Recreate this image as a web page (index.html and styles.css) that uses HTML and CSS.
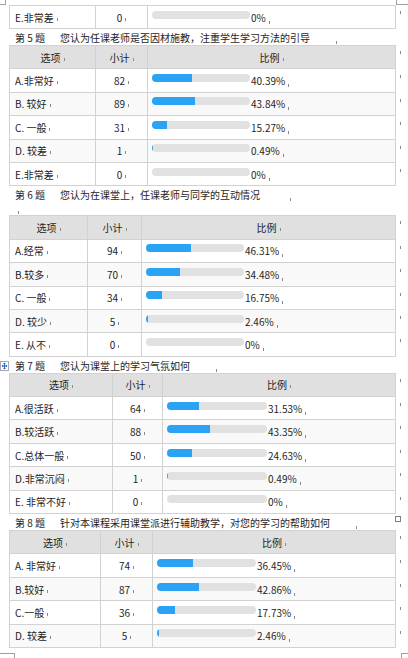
FILE: index.html
```html
<!DOCTYPE html>
<html lang="zh-CN">
<head>
<meta charset="utf-8">
<title>问卷统计</title>
<link rel="stylesheet" href="styles.css">
</head>
<body>
<div class="page">
  <span class="crop crop-tl"></span>
  <span class="crop crop-tr"></span>
  <span class="crop crop-bl"></span>
  <span class="crop crop-br"></span>

  <div class="tbl t5 partial">
    <div class="row">
      <div class="c c1">E.非常差<i class="m"></i></div>
      <div class="c c2">0<i class="m"></i></div>
      <div class="c c3"><span class="bar"><span class="fill" style="width:0%"></span></span><span class="pct">0%<i class="m"></i></span></div>
      <i class="rm"></i>
    </div>
  </div>

  <div class="title"><span class="qn">第 5 题</span>您认为任课老师是否因材施教，注重学生学习方法的引导<i class="m tm"></i></div>
  <div class="tbl t5">
    <div class="row hd">
      <div class="c c1">选项<i class="m"></i></div>
      <div class="c c2">小计<i class="m"></i></div>
      <div class="c c3 ctr">比例<i class="m"></i></div>
      <i class="rm"></i>
    </div>
    <div class="row">
      <div class="c c1">A.非常好<i class="m"></i></div>
      <div class="c c2">82<i class="m"></i></div>
      <div class="c c3"><span class="bar"><span class="fill" style="width:40.39%"></span></span><span class="pct">40.39%<i class="m"></i></span></div>
      <i class="rm"></i>
    </div>
    <div class="row alt">
      <div class="c c1">B. 较好<i class="m"></i></div>
      <div class="c c2">89<i class="m"></i></div>
      <div class="c c3"><span class="bar"><span class="fill" style="width:43.84%"></span></span><span class="pct">43.84%<i class="m"></i></span></div>
      <i class="rm"></i>
    </div>
    <div class="row">
      <div class="c c1">C. 一般<i class="m"></i></div>
      <div class="c c2">31<i class="m"></i></div>
      <div class="c c3"><span class="bar"><span class="fill" style="width:15.27%"></span></span><span class="pct">15.27%<i class="m"></i></span></div>
      <i class="rm"></i>
    </div>
    <div class="row alt">
      <div class="c c1">D. 较差<i class="m"></i></div>
      <div class="c c2">1<i class="m"></i></div>
      <div class="c c3"><span class="bar"><span class="fill" style="width:0.49%"></span></span><span class="pct">0.49%<i class="m"></i></span></div>
      <i class="rm"></i>
    </div>
    <div class="row">
      <div class="c c1">E.非常差<i class="m"></i></div>
      <div class="c c2">0<i class="m"></i></div>
      <div class="c c3"><span class="bar"><span class="fill" style="width:0%"></span></span><span class="pct">0%<i class="m"></i></span></div>
      <i class="rm"></i>
    </div>
  </div>

  <div class="title"><span class="qn">第 6 题</span>您认为在课堂上，任课老师与同学的互动情况<i class="m tm tm6"></i></div>
  <div class="blank"><i class="m"></i></div>
  <div class="tbl t6">
    <div class="row hd">
      <div class="c c1">选项<i class="m"></i></div>
      <div class="c c2">小计<i class="m"></i></div>
      <div class="c c3 ctr">比例<i class="m"></i></div>
      <i class="rm"></i>
    </div>
    <div class="row">
      <div class="c c1">A.经常<i class="m"></i></div>
      <div class="c c2">94<i class="m"></i></div>
      <div class="c c3"><span class="bar"><span class="fill" style="width:46.31%"></span></span><span class="pct">46.31%<i class="m"></i></span></div>
      <i class="rm"></i>
    </div>
    <div class="row alt">
      <div class="c c1">B.较多<i class="m"></i></div>
      <div class="c c2">70<i class="m"></i></div>
      <div class="c c3"><span class="bar"><span class="fill" style="width:34.48%"></span></span><span class="pct">34.48%<i class="m"></i></span></div>
      <i class="rm"></i>
    </div>
    <div class="row">
      <div class="c c1">C. 一般<i class="m"></i></div>
      <div class="c c2">34<i class="m"></i></div>
      <div class="c c3"><span class="bar"><span class="fill" style="width:16.75%"></span></span><span class="pct">16.75%<i class="m"></i></span></div>
      <i class="rm"></i>
    </div>
    <div class="row alt">
      <div class="c c1">D. 较少<i class="m"></i></div>
      <div class="c c2">5<i class="m"></i></div>
      <div class="c c3"><span class="bar"><span class="fill" style="width:2.46%"></span></span><span class="pct">2.46%<i class="m"></i></span></div>
      <i class="rm"></i>
    </div>
    <div class="row">
      <div class="c c1">E. 从不<i class="m"></i></div>
      <div class="c c2">0<i class="m"></i></div>
      <div class="c c3"><span class="bar"><span class="fill" style="width:0%"></span></span><span class="pct">0%<i class="m"></i></span></div>
      <i class="rm"></i>
    </div>
  </div>

  <div class="title"><span class="handle"><svg width="9" height="10" viewBox="0 0 9 10"><rect x="0.5" y="0.5" width="8" height="9" fill="#fff" stroke="#a9a9a9"/><path d="M4.5 2v6M2 5h5" stroke="#2c62c0" stroke-width="1"/><path d="M4.5 1.5l-1.5 1.6h3zM4.5 8.5l-1.5-1.6h3zM1.5 5l1.6-1.5v3zM7.5 5l-1.6-1.5v3z" fill="#2c62c0"/></svg></span><span class="qn">第 7 题</span>您认为课堂上的学习气氛如何<i class="m tm"></i></div>
  <div class="tbl t7">
    <div class="row hd">
      <div class="c c1">选项<i class="m"></i></div>
      <div class="c c2">小计<i class="m"></i></div>
      <div class="c c3 ctr">比例<i class="m"></i></div>
      <i class="rm"></i>
    </div>
    <div class="row">
      <div class="c c1">A.很活跃<i class="m"></i></div>
      <div class="c c2">64<i class="m"></i></div>
      <div class="c c3"><span class="bar"><span class="fill" style="width:31.53%"></span></span><span class="pct">31.53%<i class="m"></i></span></div>
      <i class="rm"></i>
    </div>
    <div class="row alt">
      <div class="c c1">B.较活跃<i class="m"></i></div>
      <div class="c c2">88<i class="m"></i></div>
      <div class="c c3"><span class="bar"><span class="fill" style="width:43.35%"></span></span><span class="pct">43.35%<i class="m"></i></span></div>
      <i class="rm"></i>
    </div>
    <div class="row">
      <div class="c c1">C.总体一般<i class="m"></i></div>
      <div class="c c2">50<i class="m"></i></div>
      <div class="c c3"><span class="bar"><span class="fill" style="width:24.63%"></span></span><span class="pct">24.63%<i class="m"></i></span></div>
      <i class="rm"></i>
    </div>
    <div class="row alt">
      <div class="c c1">D.非常沉闷<i class="m"></i></div>
      <div class="c c2">1<i class="m"></i></div>
      <div class="c c3"><span class="bar"><span class="fill" style="width:0.49%"></span></span><span class="pct">0.49%<i class="m"></i></span></div>
      <i class="rm"></i>
    </div>
    <div class="row">
      <div class="c c1">E. 非常不好<i class="m"></i></div>
      <div class="c c2">0<i class="m"></i></div>
      <div class="c c3"><span class="bar"><span class="fill" style="width:0%"></span></span><span class="pct">0%<i class="m"></i></span></div>
      <i class="rm"></i>
    </div>
    <span class="resize"></span>
  </div>

  <div class="title"><span class="qn">第 8 题</span>针对本课程采用课堂派进行辅助教学，对您的学习的帮助如何<i class="m tm"></i></div>
  <div class="tbl t8">
    <div class="row hd">
      <div class="c c1">选项<i class="m"></i></div>
      <div class="c c2">小计<i class="m"></i></div>
      <div class="c c3 ctr">比例<i class="m"></i></div>
      <i class="rm"></i>
    </div>
    <div class="row">
      <div class="c c1">A. 非常好<i class="m"></i></div>
      <div class="c c2">74<i class="m"></i></div>
      <div class="c c3"><span class="bar"><span class="fill" style="width:36.45%"></span></span><span class="pct">36.45%<i class="m"></i></span></div>
      <i class="rm"></i>
    </div>
    <div class="row alt">
      <div class="c c1">B.较好<i class="m"></i></div>
      <div class="c c2">87<i class="m"></i></div>
      <div class="c c3"><span class="bar"><span class="fill" style="width:42.86%"></span></span><span class="pct">42.86%<i class="m"></i></span></div>
      <i class="rm"></i>
    </div>
    <div class="row">
      <div class="c c1">C.一般<i class="m"></i></div>
      <div class="c c2">36<i class="m"></i></div>
      <div class="c c3"><span class="bar"><span class="fill" style="width:17.73%"></span></span><span class="pct">17.73%<i class="m"></i></span></div>
      <i class="rm"></i>
    </div>
    <div class="row alt">
      <div class="c c1">D. 较差<i class="m"></i></div>
      <div class="c c2">5<i class="m"></i></div>
      <div class="c c3"><span class="bar"><span class="fill" style="width:2.46%"></span></span><span class="pct">2.46%<i class="m"></i></span></div>
      <i class="rm"></i>
    </div>
  </div>
</div>
</body>
</html>
```
FILE: styles.css
```css
html, body {
  margin: 0;
  padding: 0;
  width: 408px;
  height: 658px;
  overflow: hidden;
  background: #fff;
}

.page {
  position: relative;
  box-sizing: border-box;
  width: 408px;
  height: 658px;
  padding: 5px 0 0 9px;
  font-family: "Noto Sans CJK SC", "Noto Sans", sans-serif;
  font-size: 10px;
  color: #1e1e1e;
}

/* crop marks */
.crop {
  position: absolute;
  border-color: #a0a0a0;
  border-style: solid;
  border-width: 0;
}
.crop-tl { left: 0; top: 0; width: 5px; height: 4px; border-right-width: 1px; border-bottom-width: 1px; }
.crop-tr { left: 396px; top: 0; width: 12px; height: 4px; border-left-width: 1px; border-bottom-width: 1px; }
.crop-bl { left: 0; top: 653px; width: 14px; height: 6px; border-top-width: 1px; border-right-width: 1px; }
.crop-br { left: 401px; top: 653px; width: 8px; height: 6px; border-top-width: 1px; border-left-width: 1px; }

/* tables */
.tbl {
  position: relative;
  display: flex;
  flex-direction: column;
}
.row {
  display: flex;
  height: 23.4px;
}
.row.hd {
  height: 24.4px;
}
.partial .row {
  height: 24px;
}
.partial .row .c,
.row.hd .c {
  border-top: 1px solid #d2d2d2;
}
.row.hd .c {
  background: #e0e0e0;
}
.row.alt .c {
  background: #f9f9f9;
}
.c {
  box-sizing: border-box;
  height: 100%;
  display: flex;
  align-items: center;
  border-right: 1px solid #d2d2d2;
  border-bottom: 1px solid #d2d2d2;
  white-space: nowrap;
  background: #fff;
}
.c1 {
  border-left: 1px solid #d2d2d2;
  padding-left: 5px;
}
.c2 {
  justify-content: center;
}
.c3 {
  padding-left: 4px;
}
.c3.ctr,
.row.hd .c1 {
  justify-content: center;
  padding-left: 0;
}

.t5 .c1 { width: 87px; }
.t5 .c2 { width: 52px; }
.t5 .c3 { width: 248px; }
.t5 .bar { width: 98px; }

.t6 .c1 { width: 79px; }
.t6 .c2 { width: 54px; }
.t6 .c3 { width: 254px; }
.t6 .bar { width: 98px; }

.t7 .c1 { width: 104px; }
.t7 .c2 { width: 50px; }
.t7 .c3 { width: 233px; }
.t7 .bar { width: 100px; }

.t8 .c1 { width: 92px; }
.t8 .c2 { width: 52px; }
.t8 .c3 { width: 243px; }
.t8 .bar { width: 99px; }

.bar {
  display: block;
  flex: none;
  height: 8px;
  margin-bottom: 5px;
  border-radius: 4px;
  background: #e1e1e1;
  overflow: hidden;
}
.fill {
  display: block;
  height: 100%;
  background: #2aa3f5;
}
.pct {
  margin-left: 1px;
}

/* formatting marks */
.m {
  display: inline-block;
  width: 1px;
  height: 3px;
  margin-left: 2px;
  border-right: 1px solid #8a8a8a;
  position: relative;
  top: 2px;
}
.rm {
  display: block;
  width: 1px;
  height: 3px;
  margin: 6px 0 0 3px;
  border-right: 1px solid #8a8a8a;
}

.title {
  position: relative;
  height: 16px;
  line-height: 18px;
  padding-left: 6px;
  white-space: nowrap;
}
.qn {
  display: inline-block;
  width: 45px;
}
.tm {
  margin-left: 25px;
}
.tm6 {
  margin-left: 29px;
}
.blank {
  height: 13px;
  line-height: 13px;
  padding-left: 6px;
}
.blank .m {
  top: 1px;
}

.handle {
  position: absolute;
  left: -9px;
  top: 4px;
  width: 9px;
  height: 10px;
  line-height: 0;
}

.resize {
  position: absolute;
  left: 386px;
  bottom: -8px;
  width: 4px;
  height: 4px;
  border: 1px solid #808080;
  background: #fff;
}
```
